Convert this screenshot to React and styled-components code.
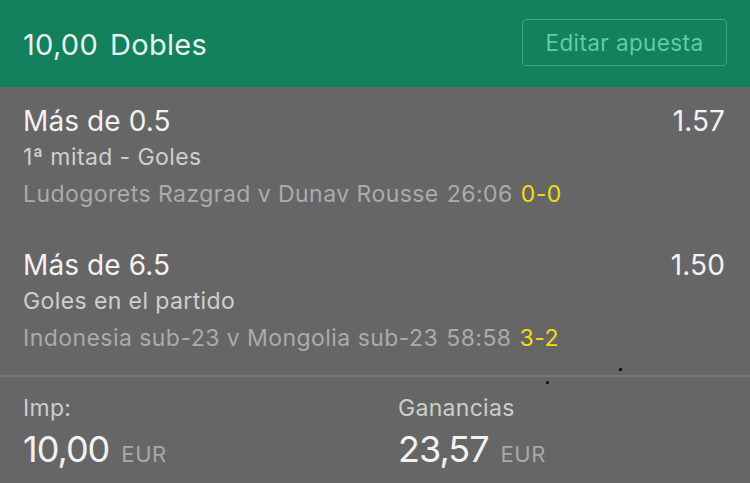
import React from "react";
import styled, { createGlobalStyle } from "styled-components";

const Global = createGlobalStyle`
  html, body { margin: 0; padding: 0; background: #666666; }
  body { font-family: Inter, "Open Sans", sans-serif; -webkit-font-smoothing: antialiased; }
`;

const Page = styled.div`
  position: relative;
  width: 750px;
  height: 483px;
  background: #666666;
  overflow: hidden;
`;

const Header = styled.div`
  height: 87px;
  background: #13805e;
  display: flex;
  align-items: center;
  justify-content: space-between;
  padding: 0 23px 0 23px;
  box-sizing: border-box;
`;

const HeaderTitle = styled.div`
  color: #e6f2ed;
  font-size: 29px;
  line-height: 34px;
  letter-spacing: 0.3px;
  display: flex;
  gap: 12px;
  margin-top: 2px;
`;

const EditButton = styled.button`
  width: 205px;
  height: 47px;
  box-sizing: border-box;
  border: 1.5px solid #3aa67e;
  border-radius: 4px;
  background: transparent;
  color: #5ccf9e;
  font-family: inherit;
  font-size: 22.5px;
  letter-spacing: 0.4px;
  padding: 0;
  margin-top: -2px;
`;

const Selection = styled.div`
  padding: 17px 25px 23px 23px;
  display: flex;
  flex-direction: column;
`;

const TitleRow = styled.div`
  display: flex;
  justify-content: space-between;
  align-items: baseline;
  color: #f2f2f2;
  font-size: 28px;
  line-height: 34px;
  letter-spacing: 0.1px;
`;

const Market = styled.div`
  color: #cfcfcf;
  font-size: 23px;
  line-height: 28px;
  letter-spacing: 0.4px;
  margin-top: 5px;
`;

const EventLine = styled.div`
  color: #ababab;
  font-size: 23px;
  line-height: 28px;
  letter-spacing: 0.45px;
  margin-top: 9px;
  display: flex;
  gap: 8px;
`;

const Score = styled.span`
  color: #f3dc12;
`;

const Footer = styled.div`
  border-top: 2px solid #777777;
  display: grid;
  grid-template-columns: 375px 1fr;
  padding: 17px 23px 0 23px;
`;

const Stat = styled.div`
  display: flex;
  flex-direction: column;
`;

const StatLabel = styled.div`
  color: #cdcdcd;
  font-size: 23px;
  line-height: 28px;
  letter-spacing: 0.3px;
`;

const StatValue = styled.div`
  color: #f2f2f2;
  font-size: 36px;
  line-height: 40px;
  letter-spacing: -1px;
  margin-top: 7px;
  display: flex;
  align-items: baseline;
  gap: 12px;
`;

const Currency = styled.span`
  color: #a8a8a8;
  font-size: 22px;
  letter-spacing: 0.6px;
`;

const Dot = styled.span`
  position: absolute;
  width: 3px;
  height: 3px;
  border-radius: 50%;
  background: #000;
  left: ${(p) => p.$x}px;
  top: ${(p) => p.$y}px;
`;

const selections = [
  {
    title: "Más de 0.5",
    price: "1.57",
    market: "1ª mitad - Goles",
    event: "Ludogorets Razgrad v Dunav Rousse",
    time: "26:06",
    score: "0-0",
  },
  {
    title: "Más de 6.5",
    price: "1.50",
    market: "Goles en el partido",
    event: "Indonesia sub-23 v Mongolia sub-23",
    time: "58:58",
    score: "3-2",
  },
];

export default function App() {
  return (
    <Page>
      <Global />
      <Header>
        <HeaderTitle>
          <span>10,00</span>
          <span>Dobles</span>
        </HeaderTitle>
        <EditButton>Editar apuesta</EditButton>
      </Header>
      {selections.map((s) => (
        <Selection key={s.title}>
          <TitleRow>
            <span>{s.title}</span>
            <span>{s.price}</span>
          </TitleRow>
          <Market>{s.market}</Market>
          <EventLine>
            <span>{s.event}</span>
            <span>{s.time}</span>
            <Score>{s.score}</Score>
          </EventLine>
        </Selection>
      ))}
      <Footer>
        <Stat>
          <StatLabel>Imp:</StatLabel>
          <StatValue>
            10,00 <Currency>EUR</Currency>
          </StatValue>
        </Stat>
        <Stat>
          <StatLabel>Ganancias</StatLabel>
          <StatValue>
            23,57 <Currency>EUR</Currency>
          </StatValue>
        </Stat>
      </Footer>
      <Dot $x={546} $y={381} />
      <Dot $x={619} $y={368} />
    </Page>
  );
}
